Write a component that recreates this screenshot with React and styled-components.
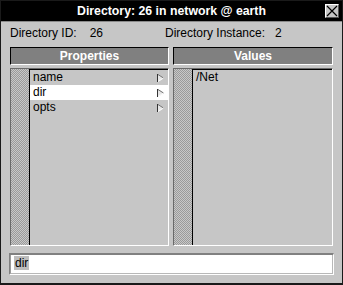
import React from "react";
import styled, { createGlobalStyle } from "styled-components";

const Global = createGlobalStyle`
  html, body { margin: 0; padding: 0; background: #c6c6c6; }
  body { font-family: "Liberation Sans", Arial, Helvetica, sans-serif; }
  * { box-sizing: border-box; }
`;

const Window = styled.div`
  width: 343px;
  height: 285px;
  border: 1px solid #1a1a1a;
  border-bottom-width: 2px;
  background: #c6c6c6;
  display: flex;
  flex-direction: column;
`;

const TitleBar = styled.div`
  height: 21px;
  background: #000;
  border-bottom: 1px solid #8a8a8a;
  display: grid;
  grid-template-columns: 20px 1fr 20px;
  align-items: center;
`;

const Title = styled.div`
  grid-column: 2;
  color: #fff;
  font-weight: bold;
  font-size: 12.3px;
  text-align: center;
  line-height: 20px;
  white-space: nowrap;
`;

const CloseBox = styled.div`
  grid-column: 3;
  width: 14px;
  height: 14px;
  justify-self: start;
  margin-left: 3px;
  background: #c6c6c6;
  border-top: 1px solid #fff;
  border-left: 1px solid #fff;
  border-right: 1px solid #555;
  border-bottom: 1px solid #555;
  display: flex;
  align-items: center;
  justify-content: center;
`;

const Body = styled.div`
  flex: 1;
  padding: 4px 8px 0 8px;
  display: flex;
  flex-direction: column;
`;

const InfoRow = styled.div`
  display: grid;
  grid-template-columns: 155px 1fr;
  font-size: 12px;
  line-height: 14px;
  color: #000;
  height: 14px;
  padding-left: 1px;
`;

const Info = styled.div`
  white-space: pre;
`;

const InfoValue = styled.span`
  margin-left: ${(p) => p.$gap}px;
`;

const Columns = styled.div`
  margin: 7px 0 0 1px;
  display: grid;
  grid-template-columns: 159px 160px;
  grid-template-rows: 18px 178px;
  column-gap: 4px;
  row-gap: 3px;
`;

const Header = styled.div`
  background: #808080;
  border-top: 1px solid #000;
  border-left: 1px solid #000;
  border-right: 1px solid #fff;
  border-bottom: 1px solid #fff;
  color: #fff;
  font-weight: bold;
  font-size: 12px;
  line-height: 16px;
  text-align: center;
`;

const ListFrame = styled.div`
  border-top: 1px solid #6a6a6a;
  border-left: 1px solid #6a6a6a;
  border-right: 1px solid #fff;
  border-bottom: 1px solid #fff;
  box-shadow: inset 0 1px 0 #000;
  display: flex;
  background: #c6c6c6;
`;

const Stripe = styled.div`
  width: 19px;
  flex: none;
  border-right: 1px solid #000;
  background-color: #c0c0c0;
  background-image: repeating-conic-gradient(#9a9a9a 0 25%, #c8c8c8 0 50%);
  background-size: 2px 2px;
`;

const List = styled.div`
  flex: 1;
  padding-top: 1px;
  display: flex;
  flex-direction: column;
`;

const Row = styled.div`
  height: 15px;
  display: flex;
  align-items: center;
  justify-content: space-between;
  padding: 0 4px 0 3px;
  font-size: 12px;
  line-height: 15px;
  color: #000;
  background: ${(p) => (p.$selected ? "#fff" : "transparent")};
`;

const ArrowSvg = styled.svg`
  flex: none;
  display: block;
`;

const InputBox = styled.div`
  margin-top: 7px;
  height: 22px;
  border-top: 2px solid #808080;
  border-left: 1px solid #808080;
  border-right: 1px solid #fff;
  border-bottom: 1px solid #fff;
  display: flex;
`;

const InputInner = styled.div`
  flex: 1;
  background: #fff;
  border-left: 1px solid #9a9a9a;
  border-right: 1px solid #b8b8b8;
  border-bottom: 1px solid #b8b8b8;
  padding: 1px 0 0 3px;
  display: flex;
  align-items: flex-start;
`;

const Selected = styled.span`
  background: #bdbdbd;
  color: #000;
  font-size: 12px;
  line-height: 14px;
  padding: 0 1px;
`;

const Arrow = () => (
  <ArrowSvg width="7" height="8" viewBox="0 0 7 8">
    <rect x="0" y="0" width="1" height="8" fill="#333" />
    <polygon points="1,0 7,4 1,8" fill="#e6e6e6" />
    <line x1="1" y1="0.5" x2="6.5" y2="4" stroke="#6e6e6e" strokeWidth="1" />
    <line x1="6.5" y1="4" x2="1" y2="7.5" stroke="#fafafa" strokeWidth="1" />
  </ArrowSvg>
);

const props = ["name", "dir", "opts"];

export default function App() {
  return (
    <>
      <Global />
      <Window>
        <TitleBar>
          <Title>Directory: 26 in network @ earth</Title>
          <CloseBox>
            <svg width="12" height="12" viewBox="0 0 12 12">
              <path d="M1 1 L11 11 M11 1 L1 11" stroke="#000" strokeWidth="1.2" />
            </svg>
          </CloseBox>
        </TitleBar>
        <Body>
          <InfoRow>
            <Info>
              Directory ID:<InfoValue $gap={13}>26</InfoValue>
            </Info>
            <Info>
              Directory Instance:<InfoValue $gap={10}>2</InfoValue>
            </Info>
          </InfoRow>
          <Columns>
            <Header>Properties</Header>
            <Header>Values</Header>
            <ListFrame>
              <Stripe />
              <List>
                {props.map((p) => (
                  <Row key={p} $selected={p === "dir"}>
                    <span>{p}</span>
                    <Arrow />
                  </Row>
                ))}
              </List>
            </ListFrame>
            <ListFrame>
              <Stripe />
              <List>
                <Row>
                  <span>/Net</span>
                </Row>
              </List>
            </ListFrame>
          </Columns>
          <InputBox>
            <InputInner>
              <Selected>dir</Selected>
            </InputInner>
          </InputBox>
        </Body>
      </Window>
    </>
  );
}
